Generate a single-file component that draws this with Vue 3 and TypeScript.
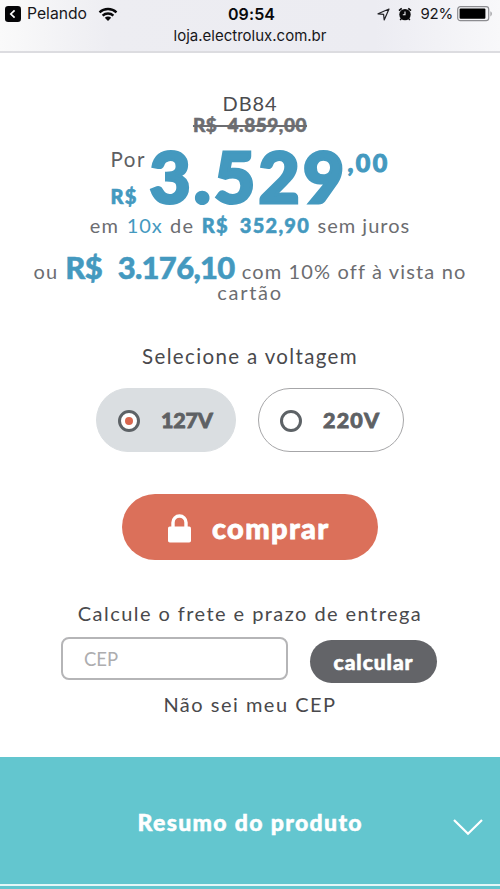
<script setup lang="ts">
import { ref } from 'vue'

const voltages = ['127V', '220V'] as const
const selected = ref<string>('127V')
const cep = ref('')
</script>

<template>
  <div class="page">
    <header class="bar">
      <div class="status">
        <div class="left">
          <svg class="back" viewBox="0 0 16 16"><rect width="16" height="16" rx="3.2" fill="#050507" /><path d="M9.6 4.3 5.8 8l3.8 3.7" fill="none" stroke="#fff" stroke-width="1.7" /></svg>
          <span class="app">Pelando</span>
          <svg class="wifi" viewBox="0 0 20 15">
            <path d="M1.5 5.3C6.2.9 13.8.9 18.5 5.3M4.6 8.6c3-2.8 7.8-2.8 10.8 0" fill="none" stroke="#08080a" stroke-width="2.3" />
            <path d="M6.8 10.8c1.8-1.6 4.6-1.6 6.4 0L10 14z" fill="#08080a" />
          </svg>
        </div>
        <span class="time">09:54</span>
        <div class="right">
          <svg class="loc" viewBox="0 0 13 13"><path d="M12 1 7.2 12 6.6 6.4 1 5.8z" fill="none" stroke="#222226" stroke-width="1.2" stroke-linejoin="round" /></svg>
          <svg class="alarm" viewBox="0 0 14 14">
            <circle cx="7" cy="7.6" r="5.7" fill="#08080a" />
            <path d="M1 3.6 3.7 1.3M13 3.6 10.3 1.3M3.2 11.8l-1 1.2M10.8 11.8l1 1.2" stroke="#08080a" stroke-width="1.6" />
            <path d="M7 4.6v3.2H4.8" fill="none" stroke="#f3f3f6" stroke-width="1.1" />
          </svg>
          <span class="pct">92%</span>
          <svg class="battery" viewBox="0 0 36 16">
            <rect x=".7" y=".7" width="31" height="14" rx="2.6" fill="#f5f5f7" stroke="#8d8d91" stroke-width="1.2" />
            <rect x="2.6" y="2.6" width="25.8" height="10.2" rx="1" fill="#000" />
            <path d="M33.5 5.3c1.6.8 1.6 4.3 0 5.1z" fill="#8d8d91" />
          </svg>
        </div>
      </div>
      <div class="url">loja.electrolux.com.br</div>
    </header>

    <main>
      <div class="model">DB84</div>
      <div class="old"><s>R$ 4.859,00</s></div>
      <div class="price">
        <div class="prefix"><span class="por">Por</span><span class="cur">R$</span></div>
        <span class="big">3.529</span>
        <span class="cents">,00</span>
      </div>
      <div class="install">
        <span>em</span><span class="times">10x</span><span>de</span><b>R$ 352,90</b><span class="interest">sem juros</span>
      </div>
      <div class="cash"><span>ou</span><b>R$ 3.176,10</b><span class="off">com 10% off à vista no</span></div>
      <div class="card">cartão</div>

      <div class="label">Selecione a voltagem</div>
      <div class="options">
        <button v-for="v in voltages" :key="v" class="option" :class="{ active: v === selected, narrow: v === '127V' }" @click="selected = v">
          <span class="radio"></span><span class="volt">{{ v }}</span>
        </button>
      </div>

      <button class="buy">
        <svg class="lock" viewBox="0 0 23 29">
          <path d="M5 14V8.5a6.5 6.5 0 0 1 13 0V14" fill="none" stroke="#fff" stroke-width="3.4" />
          <rect y="12.5" width="23" height="16" rx="1.8" fill="#fff" />
        </svg>
        <span>comprar</span>
      </button>

      <div class="freight">Calcule o frete e prazo de entrega</div>
      <div class="form">
        <input v-model="cep" placeholder="CEP" />
        <button class="calc">calcular</button>
      </div>
      <div class="unknown">Não sei meu CEP</div>
    </main>

    <section class="summary">
      <div class="title">
        <span>Resumo do produto</span>
        <svg class="chevron" viewBox="0 0 32 18"><path d="M2 2 16 15.8 30 2" fill="none" stroke="#fff" stroke-width="2.2" /></svg>
      </div>
    </section>
  </div>
</template>

<style>
body { background: #fff; }
</style>

<style scoped>
.page {
  width: 500px;
  height: 889px;
  display: flex;
  flex-direction: column;
  overflow: hidden;
  background: #fff;
  color: #6c6d71;
  font: 400 20px/22px Lato, sans-serif;
  white-space: nowrap;
}
button { border: 0; padding: 0; margin: 0; font: inherit; color: inherit; box-sizing: border-box; }
svg { display: block; flex: none; }
.bar {
  box-sizing: border-box;
  height: 53px;
  flex: none;
  border-bottom: 2px solid #dcdce0;
  background: linear-gradient(90deg, #fafafa 0, #ededf2 22%, #ececf2 75%, #f8f8fa 100%);
  color: #17171a;
  font-family: Inter, sans-serif;
}
.status { display: grid; grid-template-columns: 1fr auto 1fr; align-items: center; height: 28px; padding: 0 7px 0 5px; }
.left, .right { display: flex; align-items: center; }
.right { justify-content: flex-end; }
.back { width: 16px; height: 16px; }
.app { margin-left: 6px; font-size: 15.7px; }
.wifi { width: 20px; height: 15px; margin-left: 11px; }
.time { font-size: 16px; font-weight: 600; color: #09090b; padding-left: 5px; letter-spacing: 0.1px; }
.loc { width: 13px; height: 13px; }
.alarm { width: 14px; height: 14px; margin: 0 8px; }
.pct { font-size: 15px; letter-spacing: -0.2px; }
.battery { width: 36px; height: 16px; margin-left: 4px; }
.url { text-align: center; font-size: 15px; line-height: 16px; }
main { display: flex; flex-direction: column; align-items: center; height: 704px; flex: none; box-sizing: border-box; padding-top: 39px; }
.model { color: #4c4c4f; letter-spacing: 0.9px; }
.old { font-weight: 900; font-size: 19px; line-height: 21px; letter-spacing: 0.55px; word-spacing: 5px; -webkit-text-stroke: 0.5px; }
.old s { text-decoration-thickness: 1.5px; }
.price { display: flex; align-items: flex-start; height: 72px; margin-top: 5px; color: #4499bf; }
.prefix { display: flex; flex-direction: column; width: 39px; padding-top: 8px; }
.por { color: #5e5f63; font-size: 20.5px; letter-spacing: 1.6px; }
.cur { margin-top: 15px; font-weight: 900; letter-spacing: 1.5px; -webkit-text-stroke: 0.6px; }
.big { font-size: 71px; line-height: 72px; font-weight: 900; letter-spacing: 3.3px; -webkit-text-stroke: 3px; }
.cents { padding-top: 9px; font-size: 25px; line-height: 26px; font-weight: 900; letter-spacing: 2.4px; -webkit-text-stroke: 1px; }
.install { display: flex; gap: 7.5px; margin-top: 2px; letter-spacing: 1.2px; }
.times { color: #4499bf; letter-spacing: 0.9px; }
.install b { color: #4499bf; font-weight: 900; letter-spacing: 1.25px; word-spacing: 5px; -webkit-text-stroke: 0.5px; }
.interest { letter-spacing: 1px; }
.cash { display: flex; align-items: baseline; gap: 7px; margin-top: 15px; height: 32px; letter-spacing: 1.15px; }
.cash b { color: #4499bf; font-weight: 900; font-size: 31px; line-height: 32px; letter-spacing: -0.7px; word-spacing: 9px; -webkit-text-stroke: 0.5px; }
.card { margin-top: -2px; letter-spacing: 1.7px; }
.label { margin-top: 42px; color: #49494c; font-size: 20.5px; letter-spacing: 1.35px; }
.options { display: flex; gap: 22px; margin-top: 21px; }
.option { display: flex; align-items: center; width: 146px; height: 64px; padding-left: 21px; border: 1.5px solid #a6a6a8; border-radius: 32px; background: #fff; color: #5e6164; }
.narrow { width: 140px; }
.option.active { border-color: #dadee1; background: #dadee1; }
.radio { display: flex; box-sizing: border-box; width: 22px; height: 22px; margin-top: 2px; border: 3px solid #5d6266; border-radius: 50%; background: #fff; align-items: center; justify-content: center; }
.active .radio::after { content: ''; width: 8px; height: 8px; border-radius: 50%; background: #d9674f; }
.volt { margin-left: 21px; font-weight: 900; font-size: 21.5px; letter-spacing: 1.2px; -webkit-text-stroke: 0.8px; }
.narrow .volt { letter-spacing: -0.2px; }
.buy { display: flex; align-items: center; width: 256px; height: 66px; margin-top: 42px; padding-left: 46px; border-radius: 33px; background: #db705a; color: #fff; font-size: 29px; line-height: 34px; font-weight: 900; letter-spacing: 1.35px; }
.lock { width: 23px; height: 29px; margin-top: 3px; }
.buy span { margin: 1px 0 0 21px; -webkit-text-stroke: 0.8px; }
.freight { margin-top: 42px; color: #49494c; letter-spacing: 1.44px; }
.form { display: flex; gap: 22px; margin: 13px 2px 0 0; height: 46px; }
.form input { box-sizing: border-box; width: 227px; height: 43px; border: 2px solid #b5b5b7; border-radius: 8px; padding: 0 0 0 21px; background: #fff; font: 400 18.5px Lato, sans-serif; color: #555; outline: 0; }
.form input::placeholder { color: #adadaf; opacity: 1; }
.calc { width: 127px; height: 43px; margin-top: 3px; border-radius: 22px; background: #636468; color: #fff; font-size: 21px; font-weight: 900; letter-spacing: 0.95px; -webkit-text-stroke: 0.6px; }
.unknown { margin-top: 10px; color: #49494c; letter-spacing: 1.5px; }
.summary { height: 132px; flex: none; box-sizing: border-box; background: #63c6cf; color: #fff; }
.title { display: flex; align-items: center; justify-content: flex-end; height: 127px; box-sizing: border-box; padding-right: 16px; font-size: 23px; font-weight: 900; letter-spacing: 1.35px; }
.title span { margin-top: 2px; -webkit-text-stroke: 0.5px; }
.chevron { width: 32px; height: 18px; margin: 13px 0 0 89px; }
.summary::after { content: ''; display: block; height: 2px; background: #e4f7f8; }
</style>
